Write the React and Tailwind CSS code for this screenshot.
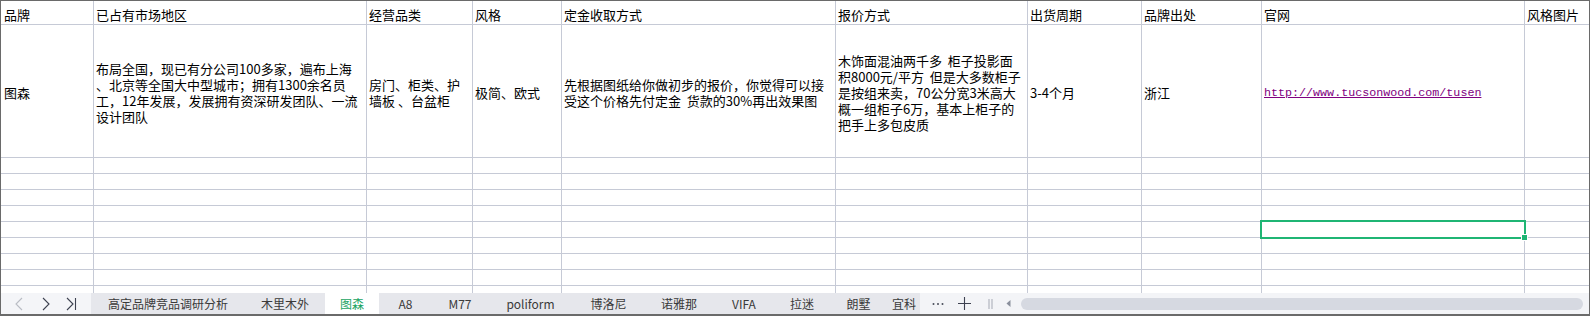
import React from "react";

const W = [
  "w-[93px]",
  "w-[273px]",
  "w-[106px]",
  "w-[89px]",
  "w-[274px]",
  "w-[192px]",
  "w-[114px]",
  "w-[120px]",
  "w-[263px]",
];

const HEAD = ["品牌", "已占有市场地区", "经营品类", "风格", "定金收取方式", "报价方式", "出货周期", "品牌出处", "官网"];

function Lines({ lines }) {
  return (
    <div className="flex flex-col">
      {lines.map((l, i) => (
        <div key={i} className="whitespace-pre leading-[16px]">
          {l}
        </div>
      ))}
    </div>
  );
}

const DATA = [
  ["图森"],
  [
    "布局全国，现已有分公司100多家，遍布上海",
    "、北京等全国大中型城市；拥有1300余名员",
    "工，12年发展，发展拥有资深研发团队、一流",
    "设计团队",
  ],
  ["房门、柜类、护", "墙板 、台盆柜"],
  ["极简、欧式"],
  ["先根据图纸给你做初步的报价，你觉得可以接", "受这个价格先付定金  货款的30%再出效果图"],
  [
    "木饰面混油两千多  柜子投影面",
    "积8000元/平方  但是大多数柜子",
    "是按组来卖，70公分宽3米高大",
    "概一组柜子6万，基本上柜子的",
    "把手上多包皮质",
  ],
  ["3-4个月"],
  ["浙江"],
];

const TABS = [
  { t: "高定品牌竞品调研分析", w: "w-[154px]" },
  { t: "木里木外", w: "w-[80px]" },
  { t: "图森", w: "w-[54px]", active: true },
  { t: "A8", w: "w-[53px]" },
  { t: "M77", w: "w-[56px]" },
  { t: "poliform", w: "w-[85px]" },
  { t: "博洛尼", w: "w-[71px]" },
  { t: "诺雅那", w: "w-[70px]" },
  { t: "VIFA", w: "w-[60px]" },
  { t: "拉迷", w: "w-[56px]" },
  { t: "朗墅", w: "w-[57px]" },
];

export default function App() {
  const line = "border-[#c6cad6]";
  return (
    <div className="relative w-[1590px] h-[316px] overflow-hidden bg-white border-l border-r border-t border-b-2 border-[#6a6a6a] font-['Noto_Sans_CJK_SC',sans-serif] text-[13px] text-black">
      {/* grid */}
      <div className="flex flex-col h-[292px]">
        {/* header */}
        <div className="flex h-[24px] shrink-0">
          {HEAD.map((h, i) => (
            <div
              key={i}
              className={`${W[i]} shrink-0 h-full border-r border-b ${line} ${i === 0 ? "pl-[3px]" : "pl-[2px]"} pt-[6px] leading-[16px] whitespace-nowrap`}
            >
              {h}
            </div>
          ))}
          <div className={`flex-1 h-full border-b ${line} pl-[2px] pt-[6px] leading-[16px] whitespace-nowrap`}>风格图片</div>
        </div>
        {/* data row */}
        <div className="flex h-[133px] shrink-0">
          {DATA.map((d, i) => (
            <div
              key={i}
              className={`${W[i]} shrink-0 h-full border-r border-b ${line} ${i === 0 ? "pl-[3px]" : "pl-[2px]"} pt-[4px] flex items-center`}
            >
              <Lines lines={d} />
            </div>
          ))}
          <div className={`${W[8]} shrink-0 h-full border-r border-b ${line} pl-[2px] pt-[4px] flex items-center`}>
            <span className="font-['Liberation_Mono',monospace] text-[11.7px] leading-[16px] text-[#800080] underline whitespace-nowrap">
              http://www.tucsonwood.com/tusen
            </span>
          </div>
          <div className={`flex-1 h-full border-b ${line}`} />
        </div>
        {/* empty rows */}
        {[0, 1, 2, 3, 4, 5, 6, 7].map((r) => (
          <div key={r} className="flex h-[16px] shrink-0">
            {W.map((w, i) => (
              <div key={i} className={`${w} shrink-0 h-full border-r border-b ${line}`} />
            ))}
            <div className={`flex-1 h-full border-b ${line}`} />
          </div>
        ))}
        <div className="flex flex-1">
          {W.map((w, i) => (
            <div key={i} className={`${w} shrink-0 h-full border-r ${line}`} />
          ))}
          <div className="flex-1" />
        </div>
      </div>

      {/* sheet tab bar */}
      <div className="flex h-[21px] text-[12px] text-[#3a3a3a]">
        <div className="w-[90px] shrink-0 bg-[#f4f5f8] flex items-center">
          <svg className="ml-[14px]" width="8" height="14" viewBox="0 0 8 14">
            <path d="M7 1 L1 7 L7 13" fill="none" stroke="#b9bcc4" strokeWidth="1.1" />
          </svg>
          <svg className="ml-[19px]" width="8" height="14" viewBox="0 0 8 14">
            <path d="M1 1 L7 7 L1 13" fill="none" stroke="#3d4150" strokeWidth="1.1" />
          </svg>
          <svg className="ml-[16px]" width="11" height="14" viewBox="0 0 11 14">
            <path d="M1 1 L7 7 L1 13" fill="none" stroke="#3d4150" strokeWidth="1.1" />
            <path d="M9.5 1 L9.5 13" fill="none" stroke="#3d4150" strokeWidth="1.1" />
          </svg>
        </div>
        <div className="w-[829px] shrink-0 bg-[#e6e7ec] flex overflow-hidden">
          {TABS.map((t, i) => (
            <div
              key={i}
              className={`${t.w} shrink-0 h-full flex items-center justify-center whitespace-nowrap ${t.active ? "bg-white text-[#1aa463]" : ""}`}
            >
              {t.t}
            </div>
          ))}
          <div className="shrink-0 h-full flex items-center pl-[5px] whitespace-nowrap">宜科</div>
        </div>
        <div className="flex-1 bg-[#f3f4f7] flex items-center">
          <svg className="ml-[12px]" width="12" height="4" viewBox="0 0 12 4">
            <circle cx="1.5" cy="2" r="1" fill="#4a4e5a" />
            <circle cx="6" cy="2" r="1" fill="#4a4e5a" />
            <circle cx="10.5" cy="2" r="1" fill="#4a4e5a" />
          </svg>
          <svg className="ml-[14px]" width="13" height="13" viewBox="0 0 13 13">
            <path d="M6.5 0 L6.5 13 M0 6.5 L13 6.5" stroke="#3d4150" strokeWidth="1.1" />
          </svg>
          <svg className="ml-[17px]" width="5" height="10" viewBox="0 0 5 10">
            <path d="M1 0 L1 10 M4 0 L4 10" stroke="#a5a9b4" strokeWidth="1" />
          </svg>
          <svg className="ml-[13px]" width="5" height="7" viewBox="0 0 5 7">
            <path d="M4.5 0 L0.5 3.5 L4.5 7 Z" fill="#8a8f9c" />
          </svg>
          <div className="ml-[10px] w-[562px] h-[12px] rounded-full bg-[#d6d9e1]" />
        </div>
      </div>

      {/* selection overlays */}
      <div className="absolute left-[1261px] top-[-1px] w-[263px] h-[1px] bg-[#1fb574]" />
      <div className="absolute left-[-1px] top-[221px] w-[1px] h-[16px] bg-[#1fb574]" />
      <div className="absolute left-[1259px] top-[219px] w-[266px] h-[19px] border-2 border-[#1fb574]" />
      <div className="absolute left-[1520px] top-[233px] w-[7px] h-[7px] bg-[#1fb574] border border-white" />
    </div>
  );
}
